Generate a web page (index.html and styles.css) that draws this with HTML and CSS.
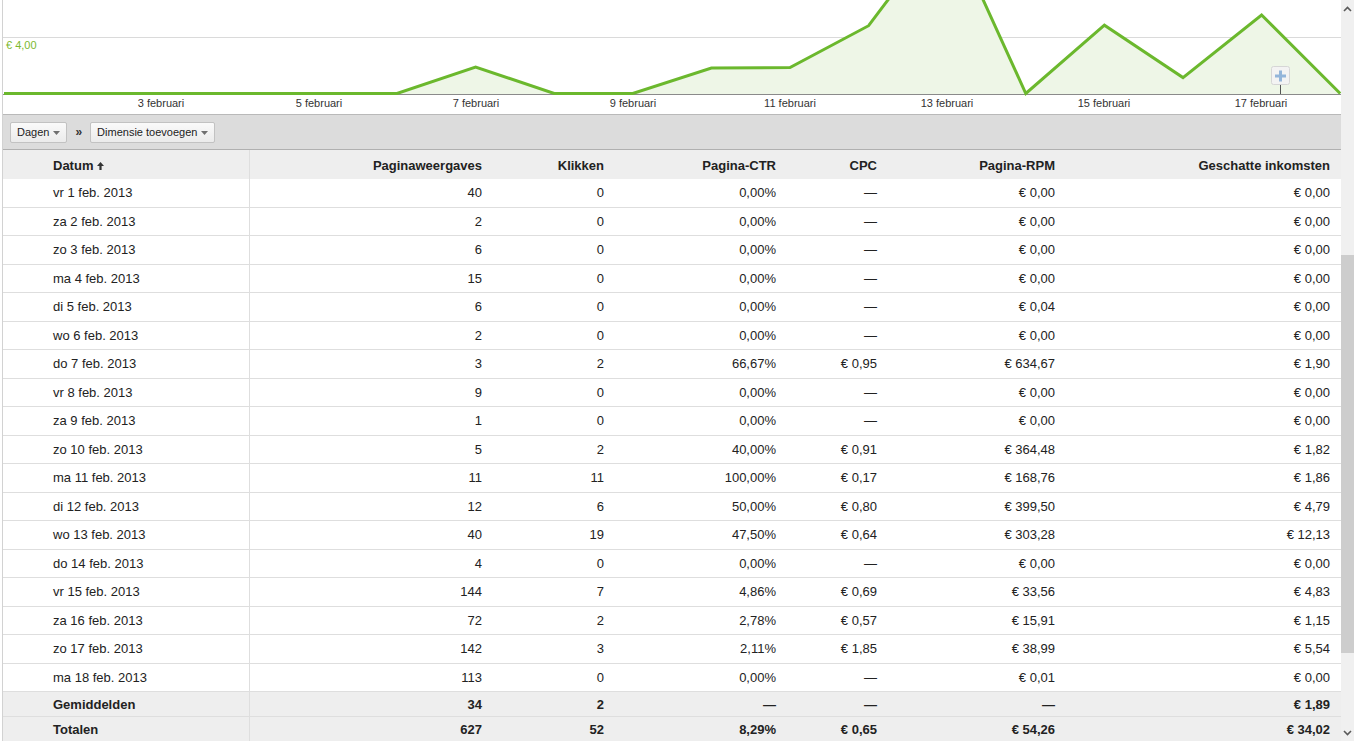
FILE: index.html
```html
<!DOCTYPE html>
<html lang="nl">
<head>
<meta charset="utf-8">
<title>Rapport</title>
<link rel="stylesheet" href="styles.css">
</head>
<body>
<div class="page">
  <div class="main">
    <div class="chart">
      <svg width="1338" height="114" viewBox="3 0 1338 114" xmlns="http://www.w3.org/2000/svg">
        <line x1="3" y1="37.5" x2="1341" y2="37.5" stroke="#dadada" stroke-width="1"/>
        <polygon fill="#eef6e7" points="4,94 82.6,94 161.2,94 239.8,94 318.4,94 397,94 475.6,67 554.2,94 632.8,94 711.4,68 790,67.5 868.6,25.7 947.2,-79 1025.8,94 1104.4,25.2 1183,77.6 1261.6,15 1340.2,94"/>
        <line x1="3" y1="94.5" x2="1341" y2="94.5" stroke="#8a8a8a" stroke-width="1"/>
        <polyline fill="none" stroke="#6bb82d" stroke-width="3" stroke-linejoin="miter" points="4,93.5 82.6,93.5 161.2,93.5 239.8,93.5 318.4,93.5 397,93.5 475.6,67 554.2,93.5 632.8,93.5 711.4,68 790,67.5 868.6,25.7 947.2,-79 1025.8,93.5 1104.4,25.2 1183,77.6 1261.6,15 1340.2,93.5"/>
        <text class="vlabel" x="6" y="49">€ 4,00</text>
        <g class="xlabels">
          <text x="161" y="107">3 februari</text>
          <text x="319" y="107">5 februari</text>
          <text x="476" y="107">7 februari</text>
          <text x="633" y="107">9 februari</text>
          <text x="790" y="107">11 februari</text>
          <text x="947" y="107">13 februari</text>
          <text x="1104" y="107">15 februari</text>
          <text x="1261" y="107">17 februari</text>
        </g>
        <line x1="1280.5" y1="84" x2="1280.5" y2="94" stroke="#555" stroke-width="1"/>
        <rect x="1271.5" y="66.5" width="18" height="18" rx="2" fill="#f3f3f3" stroke="#d6d6d6"/>
        <path d="M1279 70.5h3v4h4v3h-4v4h-3v-4h-4v-3h4z" fill="#93b5da"/>
      </svg>
    </div>
    <div class="toolbar">
      <button class="btn">Dagen <svg class="caret" width="7" height="4" viewBox="0 0 7 4"><path d="M0 0h7L3.5 4z"/></svg></button>
      <span class="sep">»</span>
      <button class="btn">Dimensie toevoegen <svg class="caret" width="7" height="4" viewBox="0 0 7 4"><path d="M0 0h7L3.5 4z"/></svg></button>
    </div>
    <div class="report">
      <div class="row head">
        <div class="c first">Datum <svg class="sort" width="7" height="8" viewBox="0 0 7 8"><path d="M3.5 0L7 4H4.6v4H2.4V4H0z"/></svg></div>
        <div class="c">Paginaweergaves</div><div class="c">Klikken</div><div class="c">Pagina-CTR</div><div class="c">CPC</div><div class="c">Pagina-RPM</div><div class="c">Geschatte inkomsten</div>
      </div>
      <div class="row"><div class="c first">vr 1 feb. 2013</div><div class="c">40</div><div class="c">0</div><div class="c">0,00%</div><div class="c">—</div><div class="c">€ 0,00</div><div class="c">€ 0,00</div></div>
      <div class="row"><div class="c first">za 2 feb. 2013</div><div class="c">2</div><div class="c">0</div><div class="c">0,00%</div><div class="c">—</div><div class="c">€ 0,00</div><div class="c">€ 0,00</div></div>
      <div class="row"><div class="c first">zo 3 feb. 2013</div><div class="c">6</div><div class="c">0</div><div class="c">0,00%</div><div class="c">—</div><div class="c">€ 0,00</div><div class="c">€ 0,00</div></div>
      <div class="row"><div class="c first">ma 4 feb. 2013</div><div class="c">15</div><div class="c">0</div><div class="c">0,00%</div><div class="c">—</div><div class="c">€ 0,00</div><div class="c">€ 0,00</div></div>
      <div class="row"><div class="c first">di 5 feb. 2013</div><div class="c">6</div><div class="c">0</div><div class="c">0,00%</div><div class="c">—</div><div class="c">€ 0,04</div><div class="c">€ 0,00</div></div>
      <div class="row"><div class="c first">wo 6 feb. 2013</div><div class="c">2</div><div class="c">0</div><div class="c">0,00%</div><div class="c">—</div><div class="c">€ 0,00</div><div class="c">€ 0,00</div></div>
      <div class="row"><div class="c first">do 7 feb. 2013</div><div class="c">3</div><div class="c">2</div><div class="c">66,67%</div><div class="c">€ 0,95</div><div class="c">€ 634,67</div><div class="c">€ 1,90</div></div>
      <div class="row"><div class="c first">vr 8 feb. 2013</div><div class="c">9</div><div class="c">0</div><div class="c">0,00%</div><div class="c">—</div><div class="c">€ 0,00</div><div class="c">€ 0,00</div></div>
      <div class="row"><div class="c first">za 9 feb. 2013</div><div class="c">1</div><div class="c">0</div><div class="c">0,00%</div><div class="c">—</div><div class="c">€ 0,00</div><div class="c">€ 0,00</div></div>
      <div class="row"><div class="c first">zo 10 feb. 2013</div><div class="c">5</div><div class="c">2</div><div class="c">40,00%</div><div class="c">€ 0,91</div><div class="c">€ 364,48</div><div class="c">€ 1,82</div></div>
      <div class="row"><div class="c first">ma 11 feb. 2013</div><div class="c">11</div><div class="c">11</div><div class="c">100,00%</div><div class="c">€ 0,17</div><div class="c">€ 168,76</div><div class="c">€ 1,86</div></div>
      <div class="row"><div class="c first">di 12 feb. 2013</div><div class="c">12</div><div class="c">6</div><div class="c">50,00%</div><div class="c">€ 0,80</div><div class="c">€ 399,50</div><div class="c">€ 4,79</div></div>
      <div class="row"><div class="c first">wo 13 feb. 2013</div><div class="c">40</div><div class="c">19</div><div class="c">47,50%</div><div class="c">€ 0,64</div><div class="c">€ 303,28</div><div class="c">€ 12,13</div></div>
      <div class="row"><div class="c first">do 14 feb. 2013</div><div class="c">4</div><div class="c">0</div><div class="c">0,00%</div><div class="c">—</div><div class="c">€ 0,00</div><div class="c">€ 0,00</div></div>
      <div class="row"><div class="c first">vr 15 feb. 2013</div><div class="c">144</div><div class="c">7</div><div class="c">4,86%</div><div class="c">€ 0,69</div><div class="c">€ 33,56</div><div class="c">€ 4,83</div></div>
      <div class="row"><div class="c first">za 16 feb. 2013</div><div class="c">72</div><div class="c">2</div><div class="c">2,78%</div><div class="c">€ 0,57</div><div class="c">€ 15,91</div><div class="c">€ 1,15</div></div>
      <div class="row"><div class="c first">zo 17 feb. 2013</div><div class="c">142</div><div class="c">3</div><div class="c">2,11%</div><div class="c">€ 1,85</div><div class="c">€ 38,99</div><div class="c">€ 5,54</div></div>
      <div class="row"><div class="c first">ma 18 feb. 2013</div><div class="c">113</div><div class="c">0</div><div class="c">0,00%</div><div class="c">—</div><div class="c">€ 0,01</div><div class="c">€ 0,00</div></div>
      <div class="row sum"><div class="c first">Gemiddelden</div><div class="c">34</div><div class="c">2</div><div class="c">—</div><div class="c">—</div><div class="c">—</div><div class="c">€ 1,89</div></div>
      <div class="row sum"><div class="c first">Totalen</div><div class="c">627</div><div class="c">52</div><div class="c">8,29%</div><div class="c">€ 0,65</div><div class="c">€ 54,26</div><div class="c">€ 34,02</div></div>
    </div>
  </div>
  <div class="scrollbar">
    <div class="arrow"><svg width="9" height="6" viewBox="0 0 9 6"><path d="M1 5L4.5 1.5 8 5" fill="none" stroke="#5a5a5a" stroke-width="1.6"/></svg></div>
    <div class="track-top"></div>
    <div class="thumb"></div>
    <div class="track-bottom"></div>
    <div class="arrow"><svg width="9" height="6" viewBox="0 0 9 6"><path d="M1 1L4.5 4.5 8 1" fill="none" stroke="#5a5a5a" stroke-width="1.6"/></svg></div>
  </div>
</div>
</body>
</html>
```
FILE: styles.css
```css
html, body {
  margin: 0;
  padding: 0;
  background: #fff;
}
body {
  font-family: Arial, "Liberation Sans", sans-serif;
  color: #222;
  overflow: hidden;
}
.page {
  display: flex;
  width: 1354px;
  height: 741px;
  overflow: hidden;
}
.main {
  flex: none;
  width: 1338px;
  margin-left: 2px;
  border-left: 1px solid #d2d2d2;
}
.chart svg {
  display: block;
}
.vlabel {
  font: 11px Arial, "Liberation Sans", sans-serif;
  fill: #7db92f;
}
.xlabels text {
  font: 11px Arial, "Liberation Sans", sans-serif;
  fill: #333;
  text-anchor: middle;
}
.toolbar {
  height: 34px;
  background: #dcdcdc;
  border-top: 1px solid #b9b9b9;
  border-bottom: 1px solid #b0b0b0;
  display: flex;
  align-items: center;
  padding-left: 7px;
}
.btn {
  height: 21px;
  box-sizing: border-box;
  border: 1px solid #c2c2c2;
  border-radius: 2px;
  background: linear-gradient(#fafafa, #ebebeb);
  font: 11px Arial, "Liberation Sans", sans-serif;
  color: #222;
  padding: 0 6px 0 6px;
  display: flex;
  align-items: center;
  gap: 4px;
  margin: 0;
}
.caret {
  fill: #707070;
  margin-top: 1px;
}
.sep {
  font: bold 12px Arial, "Liberation Sans", sans-serif;
  color: #333;
  margin: 0 8px 0 8px;
}
.report {
  display: flex;
  flex-direction: column;
}
.row {
  display: grid;
  grid-template-columns: 247px 242px 122px 172px 101px 178px 276px;
  height: 28.5px;
  box-sizing: border-box;
  border-bottom: 1px solid #dedede;
  font-size: 13px;
}
.c {
  display: flex;
  align-items: center;
  justify-content: flex-end;
  padding-right: 10px;
  white-space: nowrap;
}
.c:last-child {
  padding-right: 11px;
}
.c.first {
  justify-content: flex-start;
  padding-left: 50px;
  padding-right: 0;
  border-right: 1px solid #dedede;
  gap: 4px;
}
.row.head {
  height: 29px;
  border-bottom: none;
  background: #eeeeee;
  font-weight: bold;
}
.row.head .c {
  padding-top: 1px;
}
.sort {
  fill: #333;
  margin-top: 1px;
}
.row.sum {
  height: 25px;
  background: #eeeeee;
  font-weight: bold;
}
.scrollbar {
  flex: none;
  width: 13px;
  background: #f0f0f0;
  display: flex;
  flex-direction: column;
}
.arrow {
  height: 17px;
  display: flex;
  align-items: center;
  justify-content: center;
}
.track-top {
  height: 238px;
}
.thumb {
  height: 398px;
  background: #cdcdcd;
}
.track-bottom {
  flex: 1;
}
```
